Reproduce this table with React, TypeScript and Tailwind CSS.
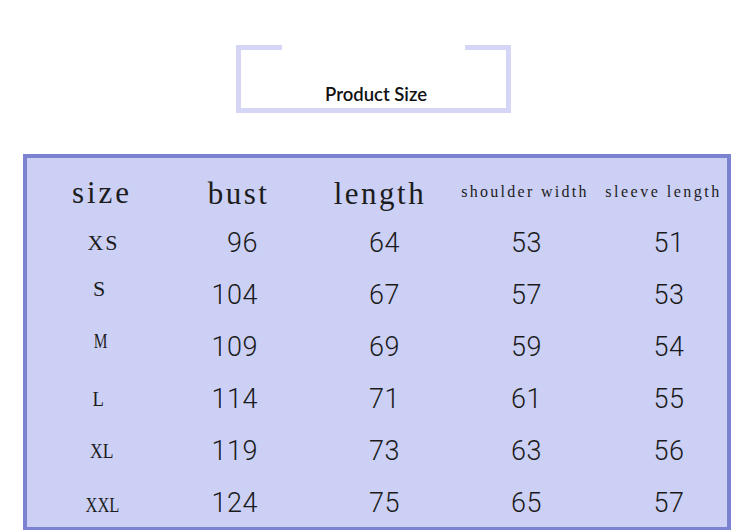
import React from "react";

type Row = {
  size: string;
  sizeCls: string;
  bust: string;
  length: string;
  shoulder: string;
  sleeve: string;
};

const rows: Row[] = [
  { size: "XS", sizeCls: "tracking-[2px] pl-[3px]", bust: "96", length: "64", shoulder: "53", sleeve: "51" },
  { size: "S", sizeCls: "pr-[6px] mb-[12px]", bust: "104", length: "67", shoulder: "57", sleeve: "53" },
  { size: "M", sizeCls: "scale-x-[0.7] pr-[5px] mb-[13px]", bust: "109", length: "69", shoulder: "59", sleeve: "54" },
  { size: "L", sizeCls: "scale-x-[0.85] pr-[8px]", bust: "114", length: "71", shoulder: "61", sleeve: "55" },
  { size: "XL", sizeCls: "scale-x-[0.8]", bust: "119", length: "73", shoulder: "63", sleeve: "56" },
  { size: "XXL", sizeCls: "scale-x-[0.75] pl-[1px] mt-[3px]", bust: "124", length: "75", shoulder: "65", sleeve: "57" },
];

const serif = "font-['Liberation_Serif',serif]";
const num = "font-['Roboto',sans-serif] font-light text-[27px] tracking-[0.5px] leading-none text-[#1a1a1a]";

export default function App() {
  return (
    <div className="w-[750px] h-[530px] overflow-hidden bg-white">
      <div className="pt-[45px] flex">
        <div className="ml-[236px] w-[275px] h-[68px] border-l-[5px] border-r-[5px] border-b-[5px] border-[#d5d6f5] flex flex-col">
          <div className="flex justify-between h-[5px]">
            <div className="w-[41px] bg-[#d5d6f5]" />
            <div className="w-[41px] bg-[#d5d6f5]" />
          </div>
          <div className="flex-1 flex items-end justify-center pl-[5px] pb-[5px]">
            <span className="font-['Lato',sans-serif] font-semibold text-[18.5px] leading-none text-[#111]">
              Product Size
            </span>
          </div>
        </div>
      </div>

      <div className="mt-[41px] ml-[23px] w-[708px] h-[377px] border-[4px] border-[#7b82d2] bg-[#ccd0f5] overflow-hidden pt-[9px]">
        <div className="grid grid-cols-[150px_123px_158px_134px_135px] h-[50px] items-center text-[#1c1c1c]">
          <div className={`${serif} text-[31px] leading-none tracking-[3px] text-center`}>size</div>
          <div className={`${serif} text-[31px] leading-none tracking-[2.5px] text-center pt-[2px]`}>bust</div>
          <div className={`${serif} text-[31px] leading-none tracking-[2.5px] text-center pt-[2px] pl-[2px]`}>length</div>
          <div className={`${serif} text-[16px] leading-none tracking-[2.3px] text-center whitespace-nowrap`}>shoulder width</div>
          <div className={`${serif} text-[16px] leading-none tracking-[2.5px] text-center whitespace-nowrap pl-[8px]`}>sleeve length</div>
        </div>
        {rows.map((r) => (
          <div
            key={r.size}
            className="grid grid-cols-[150px_123px_158px_134px_135px] h-[52px] items-center"
          >
            <div className="flex justify-center">
              <span className={`${serif} inline-block text-[22px] leading-none text-[#1c1c1c] ${r.sizeCls}`}>
                {r.size}
              </span>
            </div>
            <div className={`${num} text-right pr-[42px]`}>{r.bust}</div>
            <div className={`${num} text-center pl-[11px]`}>{r.length}</div>
            <div className={`${num} text-center pl-[3px]`}>{r.shoulder}</div>
            <div className={`${num} text-center pl-[19px]`}>{r.sleeve}</div>
          </div>
        ))}
      </div>
    </div>
  );
}
